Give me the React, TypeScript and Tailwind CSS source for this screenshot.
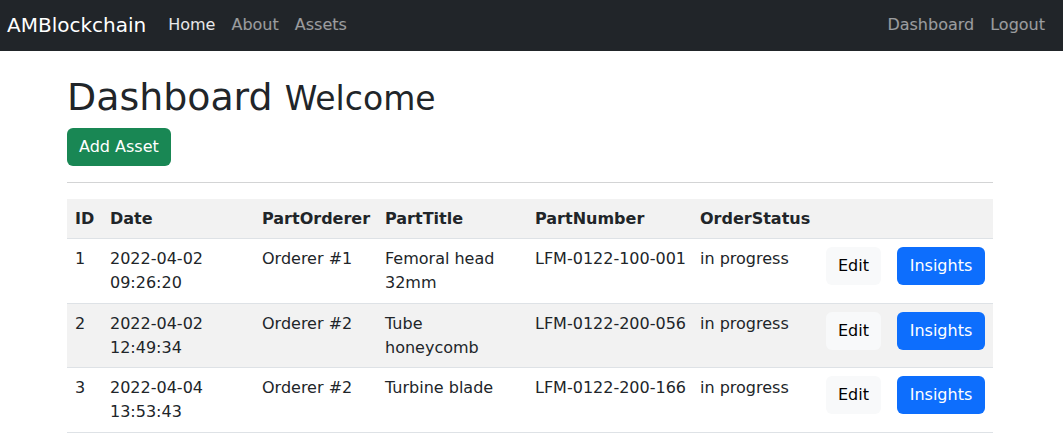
import React from 'react';

interface IAsset {
    id: number;
    date: string;
    orderer: string;
    title: string;
    number: string;
    status: string;
}

const assets: IAsset[] = [
    { id: 1, date: '2022-04-02 09:26:20', orderer: 'Orderer #1', title: 'Femoral head 32mm', number: 'LFM-0122-100-001', status: 'in progress' },
    { id: 2, date: '2022-04-02 12:49:34', orderer: 'Orderer #2', title: 'Tube honeycomb', number: 'LFM-0122-200-056', status: 'in progress' },
    { id: 3, date: '2022-04-04 13:53:43', orderer: 'Orderer #2', title: 'Turbine blade', number: 'LFM-0122-200-166', status: 'in progress' },
];

export default function App() {
    return (
        <div className="min-h-screen bg-white text-[#212529] font-['DejaVu_Sans',sans-serif] text-base leading-6">
            <nav className="h-[51px] bg-[#212529] flex items-center justify-between pl-[7px] pr-[10px] pb-[2px]">
                <div className="flex items-center">
                    <a className="text-xl text-white mr-[14px]">AMBlockchain</a>
                    <a className="px-2 text-white/90">Home</a>
                    <a className="px-2 text-white/55">About</a>
                    <a className="px-2 text-white/55">Assets</a>
                </div>
                <div className="flex items-center">
                    <a className="px-2 text-white/55">Dashboard</a>
                    <a className="px-2 text-white/55">Logout</a>
                </div>
            </nav>

            <div className="w-[926px] ml-[67px] pt-6">
                <h1 className="text-[37.9px] leading-[1.2] mb-2 font-normal">
                    Dashboard <small className="text-[33px] leading-none">Welcome</small>
                </h1>
                <button className="h-[38px] px-3 rounded-md bg-[#198754] text-white">Add Asset</button>
                <hr className="my-4 border-t border-[#d3d4d5]" />

                <table className="w-full table-fixed border-collapse text-left">
                    <thead>
                        <tr className="bg-[#f2f2f2] border-b border-[#dee2e6]">
                            <th className="w-[35px] px-2 py-[7.5px] font-bold">ID</th>
                            <th className="w-[152px] px-2 py-[7.5px] font-bold">Date</th>
                            <th className="w-[123px] px-2 py-[7.5px] font-bold">PartOrderer</th>
                            <th className="w-[150px] px-2 py-[7.5px] font-bold">PartTitle</th>
                            <th className="w-[165px] px-2 py-[7.5px] font-bold">PartNumber</th>
                            <th className="w-[126px] px-2 py-[7.5px] font-bold">OrderStatus</th>
                            <th className="w-[71px] px-2 py-[7.5px]"></th>
                            <th className="px-2 py-[7.5px]"></th>
                        </tr>
                    </thead>
                    <tbody>
                        {assets.map((a, i) => (
                            <tr key={a.id} className={i % 2 === 1 ? 'bg-[#f2f2f2] border-b border-[#dee2e6]' : 'border-b border-[#dee2e6]'}>
                                <td className="px-2 pt-2 pb-[7.5px] align-top">{a.id}</td>
                                <td className="px-2 pt-2 pb-[7.5px] align-top">{a.date}</td>
                                <td className="px-2 pt-2 pb-[7.5px] align-top">{a.orderer}</td>
                                <td className="px-2 pt-2 pb-[7.5px] align-top">{a.title}</td>
                                <td className="px-2 pt-2 pb-[7.5px] align-top whitespace-nowrap">{a.number}</td>
                                <td className="px-2 pt-2 pb-[7.5px] align-top">{a.status}</td>
                                <td className="px-2 pt-2 pb-[7.5px] align-top">
                                    <button className="h-[38px] w-[55px] rounded-md bg-[#f8f9fa] text-[#000]">Edit</button>
                                </td>
                                <td className="px-2 pt-2 pb-[7.5px] align-top">
                                    <button className="h-[38px] w-[88px] rounded-md bg-[#0d6efd] text-white">Insights</button>
                                </td>
                            </tr>
                        ))}
                    </tbody>
                </table>
            </div>
        </div>
    );
}
